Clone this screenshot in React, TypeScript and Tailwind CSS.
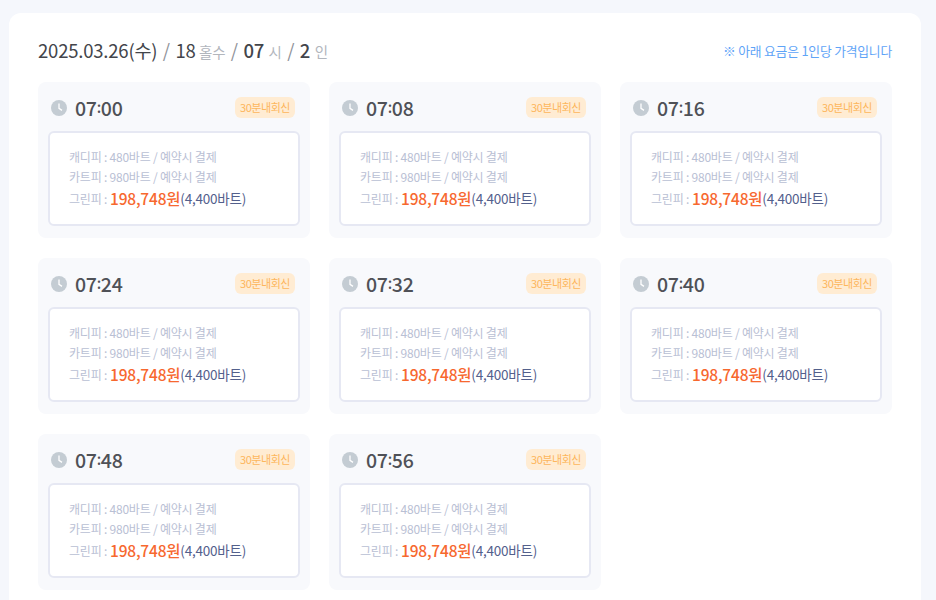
const font = "font-['Noto_Sans_CJK_KR','Noto_Sans',sans-serif]";

const times = ["07:00", "07:08", "07:16", "07:24", "07:32", "07:40", "07:48", "07:56"];

function ClockIcon() {
  return (
    <svg width="16" height="16" viewBox="0 0 16 16" className="shrink-0">
      <circle cx="8" cy="8" r="8" fill="#c4ccd3" />
      <path d="M8 3.6V8.4L11 10.4" fill="none" stroke="#ffffff" strokeWidth="1.3" />
    </svg>
  );
}

function TimeCard({ time }: { time: string }) {
  const [hour, minute] = time.split(":");
  return (
    <div className="h-[156px] rounded-lg bg-[#f8f9fc] px-2.5 pt-[14px]">
      <div className="flex h-[24px] items-center justify-between pl-[3px] pr-[5px]">
        <div className="flex items-center gap-2">
          <ClockIcon />
          <span className="-mt-[1px] text-[19.5px] font-medium leading-6 tracking-[-0.3px] text-[#4f5157]">
            {hour}
            <span className="align-[3px] text-[15px]">:</span>
            {minute}
          </span>
        </div>
        <span className="-mt-[1px] rounded-md bg-[#ffecd3] px-[5px] py-0.5 text-[11px] leading-[17px] tracking-[-0.45px] text-[#fdb65c]">
          30분내회신
        </span>
      </div>
      <div className="mt-[11px] h-[95px] rounded-md border-2 border-[#e6e8f3] bg-white pl-[19px] pt-[14px] text-[12px] tracking-[-0.22px] text-[#b9c0d4]">
        <p className="leading-5">캐디피 : 480바트 / 예약시 결제</p>
        <p className="leading-5">카트피 : 980바트 / 예약시 결제</p>
        <p className="flex h-[22px] items-center pt-[1px]">
          <span className="mr-[3px]">그린피 :</span>
          <span className="text-[15.5px] font-medium tracking-[-0.2px] text-[#f7682f]">198,748원</span>
          <span className="text-[13.5px] text-[#53608c]">(4,400바트)</span>
        </p>
      </div>
    </div>
  );
}

export default function App() {
  return (
    <div className={`h-[600px] overflow-hidden bg-[#f5f7fc] pl-[9px] pr-[15px] pt-[13px] ${font}`}>
      <div className="h-[600px] rounded-t-xl bg-white px-[29px]">
        <div className="flex h-[69px] items-center justify-between pt-[7px]">
          <div className="flex items-baseline gap-[5.5px] text-[18.5px] tracking-[-0.2px] text-[#43454b]">
            <span>2025.03.26(수)</span>
            <span className="text-[#8f9299]">/</span>
            <span>18</span>
            <span className="-ml-[2px] text-[14.5px] text-[#b2b6bd]">홀수</span>
            <span className="text-[#8f9299]">/</span>
            <span className="font-medium">07</span>
            <span className="-ml-[1px] text-[14.5px] text-[#b2b6bd]">시</span>
            <span className="text-[#8f9299]">/</span>
            <span className="font-medium">2</span>
            <span className="-ml-[1px] text-[14.5px] text-[#b2b6bd]">인</span>
          </div>
          <span className="text-[12.8px] tracking-[-0.2px] text-[#5fa4f7]">※ 아래 요금은 1인당 가격입니다</span>
        </div>
        <div className="grid grid-cols-3 gap-x-[19px] gap-y-5">
          {times.map((time) => (
            <TimeCard key={time} time={time} />
          ))}
        </div>
      </div>
    </div>
  );
}
